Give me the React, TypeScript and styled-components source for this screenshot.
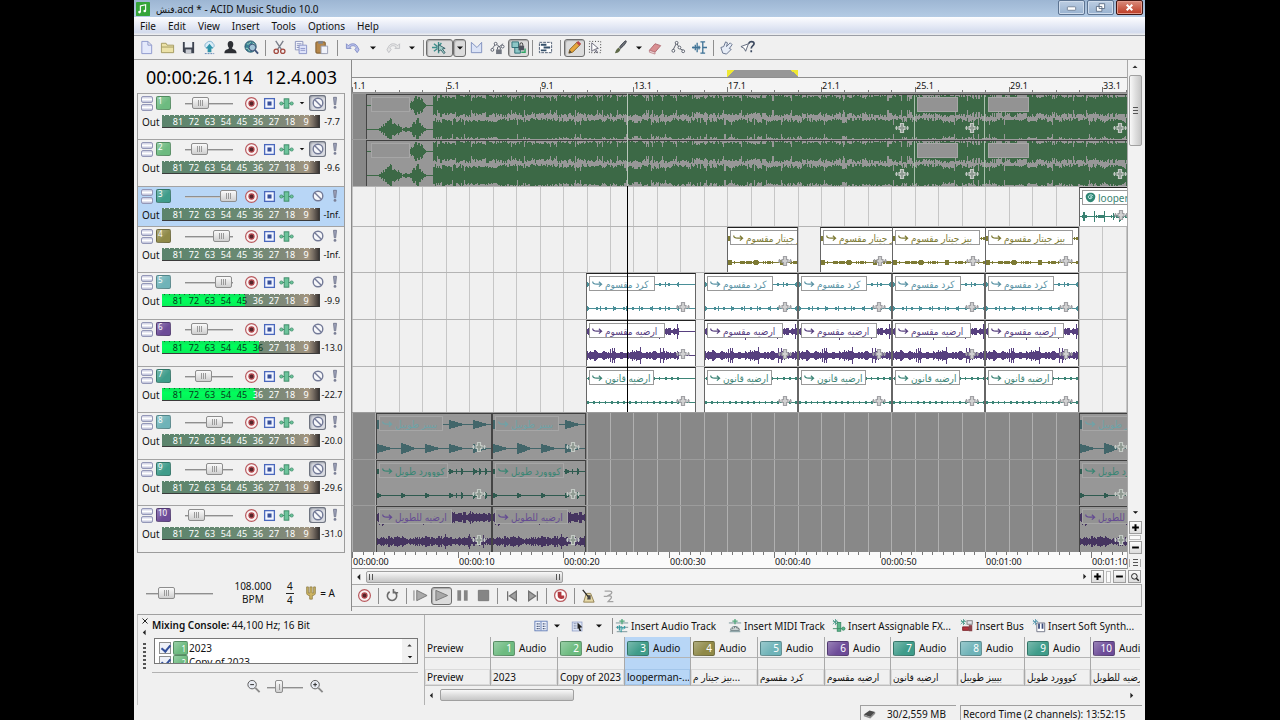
import React from 'react';
import styled, { createGlobalStyle, css } from 'styled-components';

const UI = `"Noto Sans", "DejaVu Sans Condensed", "DejaVu Sans", sans-serif`;

const Global = createGlobalStyle`
  * { box-sizing: border-box; }
  body { margin: 0; background: #000; font: 10px/14px ${UI}; color: #111; }
  button { font: inherit; color: inherit; background: none; border: 0; padding: 0; margin: 0; }
  svg { display: block; flex: none; }
`;

/* ---------- data ---------- */

const GREEN = '#6dbb80';
const TEAL = '#3f9c8a';
const OLIVE = '#8f8947';
const AQUA = '#6fb3b8';
const PURPLE = '#6d4c98';

type Kind = 'song' | 'sparse' | 'blocks' | 'dots' | 'fuzz' | 'fine' | 'decay' | 'burst' | 'roar';
type ClipData = { x: number; w: number; fx?: number };
type Track = {
  n: number; h: number; color: string; level: number; db: string; name: string; fill?: number;
  muted?: boolean; caret?: boolean; selected?: boolean;
  kind: Kind; wave: string; labelInk: string; label: string; labelW: number; clips: ClipData[];
};

const LOOP: ClipData[] = [
  { x: 234, w: 110 }, { x: 352, w: 94 }, { x: 446, w: 94 }, { x: 540, w: 93 }, { x: 633, w: 94 },
];
const INTRO: ClipData[] = [{ x: 24, w: 116 }, { x: 140, w: 94 }, { x: 727, w: 94, fx: 34 }];

const TRACKS: Track[] = [
  { n: 1, h: 46, color: GREEN, level: 28, db: '-7.7', name: '2023', muted: true, caret: true, kind: 'song', wave: '#3c6946', labelInk: '#7fa48a', label: '', labelW: 40, clips: [{ x: 14, w: 1400 }] },
  { n: 2, h: 47, color: GREEN, level: 26, db: '-9.6', name: 'Copy of 2023', muted: true, caret: true, kind: 'song', wave: '#3c6946', labelInk: '#7fa48a', label: '', labelW: 40, clips: [{ x: 14, w: 1400 }] },
  { n: 3, h: 40, color: TEAL, level: 100, db: '-Inf.', name: 'looperman-...', selected: true, kind: 'sparse', wave: '#3a8272', labelInk: '#3a8272', label: 'looperman', labelW: 80, clips: [{ x: 727, w: 94, fx: 34 }] },
  { n: 4, h: 46, color: OLIVE, level: 82, db: '-Inf.', name: 'بيز جيتار م...', kind: 'blocks', wave: '#7d7a34', labelInk: '#7d7a34', label: 'بيز جيتار مقسوم', labelW: 85, clips: [{ x: 375, w: 71 }, { x: 468, w: 73 }, { x: 540, w: 94 }, { x: 633, w: 94 }] },
  { n: 5, h: 47, color: AQUA, level: 87, db: '-9.9', name: 'كرد مقسوم', fill: 53, kind: 'dots', wave: '#4a8f98', labelInk: '#5a93a5', label: 'كرد مقسوم', labelW: 66, clips: LOOP },
  { n: 6, h: 47, color: PURPLE, level: 26, db: '-13.0', name: 'ارضيه مقسوم', fill: 62, kind: 'fuzz', wave: '#57407f', labelInk: '#57407f', label: 'ارضيه مقسوم', labelW: 76, clips: LOOP },
  { n: 7, h: 46, color: TEAL, level: 36, db: '-22.7', name: 'ارضيه قانون', fill: 59, kind: 'fine', wave: '#3d8577', labelInk: '#3d8577', label: 'ارضيه قانون', labelW: 65, clips: LOOP },
  { n: 8, h: 47, color: AQUA, level: 65, db: '-20.0', name: 'بيييز طويبل', muted: true, kind: 'decay', wave: '#42666a', labelInk: '#6ea3a8', label: 'بيييز طويبل', labelW: 64, clips: INTRO },
  { n: 9, h: 46, color: TEAL, level: 65, db: '-29.6', name: 'كووورد طويل', muted: true, kind: 'burst', wave: '#2f5b50', labelInk: '#3a8674', label: 'كووورد طويل', labelW: 69, clips: INTRO },
  { n: 10, h: 47, color: PURPLE, level: 18, db: '-31.0', name: 'ارضيه للطويل', muted: true, kind: 'roar', wave: '#453460', labelInk: '#644b92', label: 'ارضيه للطويل', labelW: 73, clips: INTRO },
];

/* ---------- wave forms ---------- */

const rand = (seed: number) => {
  let a = seed * 0x9e3779b1;
  return () => {
    a = (a + 0x6d2b79f5) | 0;
    let t = Math.imul(a ^ (a >>> 15), 1 | a);
    t = (t + Math.imul(t ^ (t >>> 7), 61 | t)) ^ t;
    return ((t ^ (t >>> 14)) >>> 0) / 4294967296;
  };
};

const bump = (x: number, c: number, half: number, h: number) =>
  Math.abs(x - c) < half ? h * (1 - Math.abs(x - c) / half) : 0;

/* r is fresh for every column, slow is held for a few columns */
function amplitude(kind: Kind, x: number, r: number, slow: number, ch: number): number {
  switch (kind) {
    case 'song': {
      if (x < 66) {
        const a = ch ? bump(x, 23, 12, 9) : 0;
        const b = bump(x, 50, 9, 10);
        const c = x > 30 && x < 42 ? 2 * r : 0;
        return (a + b) * (0.6 + r * 0.7) + c;
      }
      if (r < 0.04) return 4;
      if (r > 0.9) return 11;
      return 5.5 + slow * 3 + r * 3;
    }
    case 'sparse': return [3, 4, 14, 24, 33].includes(x % 36) ? 2 + r * 3 : r > 0.6 ? 1 : 0;
    case 'blocks': return x % 13 < 4 ? (x % 26 < 13 ? 2 : 1) : r > 0.6 ? 1 : 0;
    case 'dots': return x % 13 < 1 ? 2 : x % 9 < 2 ? 1 : 0;
    case 'fuzz': return 1 + slow * 2 + r * 2 + (r > 0.93 ? 3 : 0);
    case 'fine': return x % 6 < 2 && r > 0.2 ? 1 : 0;
    case 'decay': return x % 24 < 14 ? (Math.floor(x / 24) % 4 === 1 ? 5 : 4) * (1 - (x % 24) / 14) : 0;
    case 'burst': {
      const p = x % 24;
      return x > 78 && p < 18 && p % 6 < 2 ? 3 - (p % 6) : p < 4 ? 2 - p / 2 : 0;
    }
    case 'roar': return 1 + r * 3 + slow * 2 + (r > 0.92 ? 2 : 0);
  }
}

function wavePath(kind: Kind, w: number, y: number, ch: number, seed: number, end: number) {
  const next = rand(seed + ch * 7);
  let d = `M0 ${y}.5H${w}`;
  let slow = 0.5;
  for (let x = 0; x < end; x++) {
    if (x % 5 === 0) slow = next();
    const a = Math.min(12, Math.round(amplitude(kind, x, next(), slow, ch)));
    if (a > 0) d += `M${x}.5 ${y - a}v${a * 2 + 1}`;
  }
  return d;
}

/* ---------- icons ---------- */

const RED = '#b2383f';

const ICONS: Record<string, React.ReactNode> = {
  note: <><rect width="16" height="16" rx="1" fill="#35a53a" /><path d="M5 11.500V4.500l6-1.500v7" stroke="#fff" fill="none" strokeWidth="1.300" /><circle cx="4" cy="11.500" r="1.500" fill="#fff" /><circle cx="10" cy="10.300" r="1.500" fill="#fff" /></>,
  file: <path d="M3 1.500h6.500l4 4v9H3zM9.500 1.500v4h4" fill="#e4e9fb" stroke="#8d97cc" />,
  open: <path d="M1.500 13.500v-10h5l1 2h7v8zM1.500 7.500h13" fill="#ece2a8" stroke="#a39a60" />,
  save: <><path d="M2 2h12v12H4l-2-2z" fill="#3e4450" /><path d="M4 2h8v6H4z" fill="#eef0f4" /><path d="M5 10h6v4H5z" fill="#c9ccd3" /></>,
  cloud: <><path d="M4 8a3 3 0 0 1 1-5 4 4 0 0 1 7 1 2.500 2.500 0 0 1 0 4z" fill="#d8ecf7" stroke="#82b2cf" /><path d="M8 4l4 5h-2v4H6V9H4z" fill="#2f93a8" /><path d="M3 14.500h10" stroke="#5a7fb2" strokeDasharray="2 1" /></>,
  user: <path d="M8 1c2 0 3 1.500 3 3.500S10 8 9.500 8.500c0 1.500 5 1 5 5.500h-13c0-4.500 5-4 5-5.500C6 8 5 6.500 5 4.500S6 1 8 1z" fill="#2e3035" />,
  globe: <><circle cx="7" cy="7" r="6" fill="#3a7f93" stroke="#27566c" /><path d="M3 4c2 1 3 0 4-2M2 9c2-1 3 1 4 3M9 3l3 2" stroke="#a4d5c0" fill="none" /><circle cx="9" cy="8" r="3.500" fill="#cfe2f5" fillOpacity=".7" stroke="#41547a" /><path d="M11.500 10.500L15 14.500" stroke="#41547a" strokeWidth="2" /></>,
  cut: <><path d="M4 1l6 9M12 1l-6 9" stroke="#7b7f8a" strokeWidth="1.500" /><circle cx="4.500" cy="12" r="2.300" fill="none" stroke="#a34a40" strokeWidth="1.400" /><circle cx="11.500" cy="12" r="2.300" fill="none" stroke="#a34a40" strokeWidth="1.400" /></>,
  copy: <><path d="M2.500 1.500h8v9h-8zM4 4h5M4 6h5M4 8h3" fill="#f4f5fc" stroke="#8b93bb" /><path d="M6.500 5.500h8v9h-8z" fill="#dfe4fa" stroke="#8b93c8" /><path d="M8 9h5M8 11h5" stroke="#8b93c8" /></>,
  paste: <><rect x="2" y="2" width="10" height="12" rx="1" fill="#b5874a" stroke="#77552a" /><path d="M4.500 1h5v3h-5z" fill="#808590" /><path d="M7.500 6.500h7v8h-7z" fill="#f1f3fb" stroke="#9aa0b4" /></>,
  undo: <path d="M1.500 4v5h5L5 7.500c3-2.500 6-1.500 7 1l-1.500 1.500 2.500 3.500 2-3-1-2C12 3 7 3 3.500 6z" fill="#b9c0ea" stroke="#7d88c4" strokeWidth=".9" />,
  redo: <path d="M14.500 4v5h-5L11 7.500c-3-2.500-6-1.500-7 1l1.500 1.500L3 13.500l-2-3 1-2C4 3 9 3 12.500 6z" fill="#e6e6e6" stroke="#bcbec2" strokeWidth=".9" />,
  snap: <><path d="M0 8h6M2 4l4 3M2 12l4-3M7 2v4M7 10v4M10 3L8 6" stroke="#3f8f8c" strokeWidth="1.500" /><path d="M7 5l7 4-3 .500 3 4-1.500 1-3-4L7 12z" fill="#a6cfca" stroke="#36636a" /></>,
  fade: <path d="M2.500 2.500v11h11v-11L8.500 8z" fill="#dbe3f6" stroke="#7f90bd" />,
  lock: <><path d="M2 10L6 4l4 3 4-3" fill="none" stroke="#666c78" /><circle cx="2.500" cy="10.500" r="1.500" fill="#fff" stroke="#555b68" /><circle cx="6" cy="4" r="1.500" fill="#fff" stroke="#555b68" /><circle cx="13.500" cy="7" r="1.500" fill="#fff" stroke="#555b68" /><rect x="6.500" y="10" width="6" height="5" fill="#70757f" /><path d="M8 10V8.500a1.500 1.500 0 0 1 3 0V10" fill="none" stroke="#555b68" /></>,
  locked: <><path d="M1 2h7v6H1zM4 8h6v6H4z" fill="#8cc6c6" stroke="#2f6e75" /><rect x="8" y="6" width="6" height="5" fill="#4f545e" /><path d="M9.500 6V4.500a1.500 1.500 0 0 1 3 0V6" fill="none" stroke="#333" /><path d="M11 13h4V9" stroke="#2fa665" fill="none" strokeWidth="1.500" /></>,
  bars: <><path d="M1.500 2.500h13v11h-13z" fill="#fff" stroke="#4b5a70" strokeDasharray="3 1" /><path d="M3 5h6M6 8h7M3 11h6" stroke="#35506a" strokeWidth="2" /></>,
  pencil: <><path d="M2 14l1-4 8-8 3 3-8 8z" fill="#e7a63c" stroke="#8a6423" /><path d="M10 3l3 3 2-2-3-3z" fill="#b9474a" /><path d="M2 14l1-3 2 2z" fill="#444" /></>,
  marquee: <><path d="M1.500 1.500h12v12h-12z" fill="none" stroke="#333" strokeDasharray="1 2" /><path d="M4 3l7 6-3 .500L10 13l-1.500.500L7 10l-3 2z" fill="#fff" stroke="#667" /></>,
  brush: <><path d="M14 1c1 1-3 6-6 8L7 7.500C9 5 13 0 14 1z" fill="#6c7078" stroke="#3f434b" /><path d="M6 8l2 2c-1 3-4 4-6 4 1-2 1-4 4-6z" fill="#5f6a4a" /></>,
  eraser: <><path d="M1.500 11l6-7 6 2-6 7z" fill="#d98f92" stroke="#b06b72" /><path d="M1.500 11l6 2v2l-6-2z" fill="#f0d9da" stroke="#b06b72" strokeWidth=".7" /></>,
  envelope: <><path d="M2 11L6 3l3 6 4 2" stroke="#555b68" fill="none" /><circle cx="2.500" cy="11.500" r="1.500" fill="#fff" stroke="#555b68" /><circle cx="6" cy="3" r="1.500" fill="#fff" stroke="#555b68" /><circle cx="9" cy="8" r="1.500" fill="#fff" stroke="#555b68" /><circle cx="13" cy="12" r="1.500" fill="#fff" stroke="#555b68" /></>,
  time: <path d="M0 8h9M1.500 7v2M3.500 5v6M5.500 3v10M7.500 6v4M9 2h5M9 14h5M11.500 2v12M11.500 8H16" stroke="#3e7296" strokeWidth="1.400" fill="none" />,
  hand: <path d="M4 14l-2-6 3-1 2-5 2 1-1 4 4-4 2 2-3 4 2 1-5 5z" fill="#e7edf7" stroke="#64718c" />,
  help: <><path d="M1 7l8-3-3 8-1.500-3z" fill="#fff" stroke="#5b6478" /><path d="M9.500 4c0-3 5.500-3 5.500 0 0 2-3 2-3 5M12 11v2" stroke="#3d4a60" strokeWidth="1.800" fill="none" /></>,
  rec: <><circle cx="8" cy="8" r="6.300" fill="#faf3f3" stroke="#b95a5f" strokeWidth="1.300" /><circle cx="8" cy="8" r="2.700" fill="#55262b" stroke="#b5474d" strokeWidth="1.300" /></>,
  square: <><rect x="2" y="2" width="12" height="12" fill="#f3f6ff" stroke="#4a68bc" strokeWidth="1.600" /><rect x="5.500" y="5.500" width="5" height="5" fill="#38509a" /></>,
  fx: <><path d="M1 8h14" stroke="#3c8a66" /><rect x="5.500" y="3" width="5" height="10" fill="#6cc49b" stroke="#3c8a66" /><circle cx="2.500" cy="8" r="1.700" fill="#6cc49b" stroke="#3c8a66" strokeWidth=".8" /><circle cx="13.500" cy="8" r="1.700" fill="#6cc49b" stroke="#3c8a66" strokeWidth=".8" /></>,
  mute: <><circle cx="8" cy="8" r="5.500" fill="#f6f7fa" stroke="#747b98" strokeWidth="1.600" /><path d="M4 4l8 8" stroke="#747b98" strokeWidth="1.600" /></>,
  solo: <><path d="M6.300 1.500h3.400l-.900 8.500h-1.600z" fill="#a0a4ba" stroke="#666c84" strokeWidth=".9" /><circle cx="8" cy="13" r="1.600" fill="#7a7f95" /></>,
  loop: <path d="M5 4a5 5 0 1 0 5 0M9 1v4h5" fill="none" stroke="#6a6a6a" strokeWidth="1.700" />,
  playstart: <path d="M1 2.500v11M4 2.500v11L15 8z" fill="#aaa" stroke="#777" />,
  play: <path d="M2 2.500v11L14.500 8z" fill="#a8a8a8" stroke="#777" />,
  pause: <path d="M2.500 2.500h4v11h-4zM9.500 2.500h4v11h-4z" fill="#858585" />,
  stop: <path d="M2.500 2.500h11v11h-11z" fill="#858585" stroke="#777" />,
  prev: <path d="M3 2.500v11M13 2.500v11L5 8z" fill="#a0a0a0" stroke="#707070" strokeWidth="1.400" />,
  next: <path d="M13 2.500v11M3 2.500v11L11 8z" fill="#a0a0a0" stroke="#707070" strokeWidth="1.400" />,
  punch: <><circle cx="8" cy="8" r="6.300" fill="#fff" stroke="#b95a5f" strokeWidth="1.400" /><path d="M5 4h4v4h3v3c-4 2-7 0-7-3z" fill={RED} /></>,
  metro: <><path d="M6 5h5l4 10H3z" fill="#e6d9a8" stroke="#8d7c4c" /><path d="M2 1l8 10" stroke="#222" strokeWidth="1.400" /><path d="M8 7h3v5H7z" fill="#444" /></>,
  count: <path d="M3 2.500h6c3 0 3 3 0 4L6 8c4-1 6 1 4 3l-3 3.500h6M2 8.500h4" stroke="#a2a2a2" strokeWidth="1.500" fill="none" />,
  fork: <path d="M3 1v7c0 2 2 3 3.500 3v4h3v-4C11 11 13 10 13 8V1h-2v7H9.300V1H6.700v7H5V1z" fill="#cdb463" stroke="#85733a" strokeWidth=".8" />,
  grid: <><rect x="1" y="2.500" width="14" height="11" fill="#eef2fc" stroke="#5c78b4" /><path d="M3 5.500h4M3 8.500h4M3 11h4M10 5.500h3M10 8.500h3M10 11h3" stroke="#4a5a7c" strokeWidth="1.400" strokeDasharray="1.500 .500" /><path d="M8 3v10" stroke="#5c78b4" /></>,
  pick: <><rect x="1.500" y="2.500" width="12" height="11" fill="#dfe6f6" stroke="#8f9ec6" /><path d="M4 4v8M6 4v8" stroke="#4a5a7c" strokeDasharray="1 1" /><path d="M8 3l6 6-3 .500 1.500 4h-2L9 10l-1 1z" fill="#222" /></>,
  insAudio: <><path d="M1 4.500h14M1 9.500h14M2 14.500h12" stroke="#6b8a90" /><path d="M8 0v6M5 2.500h6" stroke="#52a77b" strokeWidth="1.500" /><path d="M3 8v3M5 7v6M7 8v7M9 9v3M11 8v3" stroke="#2f9aa0" strokeWidth="1.300" /></>,
  insMidi: <><path d="M1 4.500h14M2 14.500h12" stroke="#6b8a90" /><path d="M8 0v6M5 2.500h6" stroke="#52a77b" strokeWidth="1.500" /><path d="M3 13c0-6 10-6 10 0z" fill="#d7e0e0" stroke="#5f7478" /><path d="M5 11h1M7 10h1M9 10h1M11 11h1" stroke="#333" /></>,
  insFx: <><path d="M4 0v7M1 3h6M1 1l5 5M6 1L1 6" stroke="#4f9d8b" /><rect x="6" y="4" width="4" height="10" fill="#5cb88c" stroke="#3c8a66" /><path d="M1 11h14" stroke="#3c8a66" /><circle cx="13" cy="11" r="1.800" fill="#5cb88c" stroke="#3c8a66" /></>,
  insBus: <><path d="M4 0v7M1 3h6M1 1l5 5M6 1L1 6" stroke="#4f9d8b" /><rect x="8" y="2" width="6" height="4" fill="#e2e4ea" stroke="#777" /><path d="M3 9h7v4H3z" fill="#b3323c" stroke="#7c2229" /><path d="M10 7h4v7h-4z" fill="#8b4248" /></>,
  insSynth: <><path d="M4 0v7M1 3h6M1 1l5 5M6 1L1 6" stroke="#5c9ab0" /><path d="M5.500 4.500h9v10h-9z" fill="#fff" stroke="#6a6f80" /><path d="M8 5v6M12 5v6" stroke="#3a4a7a" strokeWidth="2" /></>,
  zoomOut: <><circle cx="6.500" cy="6" r="4.500" fill="#e8ebf2" stroke="#555" /><path d="M4.500 6h4" stroke="#222" /><path d="M10 9.500l4.500 4.500" stroke="#8a8a8a" strokeWidth="2" /></>,
  zoomIn: <><circle cx="6.500" cy="6" r="4.500" fill="#e8ebf2" stroke="#555" /><path d="M4.500 6h4M6.500 4v4" stroke="#222" /><path d="M10 9.500l4.500 4.500" stroke="#8a8a8a" strokeWidth="2" /></>,
  lens: <><circle cx="7" cy="7" r="4.500" fill="none" stroke="#222" strokeWidth="1.600" /><path d="M10 10l4 4" stroke="#222" strokeWidth="2.200" /></>,
  plus: <path d="M8 2v12M2 8h12" stroke="#000" strokeWidth="3.500" />,
  minus: <path d="M2 8h12" stroke="#000" strokeWidth="3.500" />,
  down: <path d="M2 5h12l-6 6z" fill="#111" />,
  up: <path d="M3 10h10L8 5z" fill="#333" />,
  left: <path d="M10 3v10L5 8z" fill="#222" />,
  right: <path d="M6 3v10l5-5z" fill="#222" />,
  hook: <path d="M1 5c0 4 3 4 6 4h6M10 5.500L14 9l-4 3.500" stroke="currentColor" strokeWidth="1.700" fill="none" />,
  loopLogo: <><path d="M8 1c5 0 7 3 7 6s-3 8-7 8-7-5-7-8 2-6 7-6z" fill="#2f8573" /><path d="M12 6c-2-3-8-2-7 2 1 3 6 2 5-1-1-1-3 0-2 1" stroke="#dff" strokeWidth="1.300" fill="none" /></>,
  min: <rect x="2" y="7" width="12" height="5" rx="1" fill="#fff" stroke="#54657c" />,
  restore: <path d="M6 2.500h8v7H6zM2 6.500h8v7H2z" fill="#fff" stroke="#54657c" strokeWidth="1.200" />,
  close: <path d="M3 3l10 10M13 3L3 13" stroke="#fff" strokeWidth="3.500" />,
  x: <path d="M3 3l10 10M13 3L3 13" stroke="#222" strokeWidth="2" />,
  chip: <><path d="M1 8l7-5 7 2-6 6z" fill="#4a4a4a" /><path d="M1 8v2l8 3v-2zM9 11v2l6-6V5z" fill="#888" /></>,
};

const Icon = ({ name, size = 16 }: { name: string; size?: number }) => (
  <svg width={size} height={size} viewBox="0 0 16 16" fill="none" aria-hidden="true">{ICONS[name]}</svg>
);

/* ---------- window chrome ---------- */

const Window = styled.main`
  margin: 0 135px 0 134px;
  min-height: 100vh;
  background: #f0f0f0;
  display: flex;
  flex-direction: column;
  white-space: nowrap;
  overflow: hidden;
`;

const TitleBar = styled.header`
  height: 17px;
  display: flex;
  align-items: center;
  gap: 6px;
  padding: 0 2px;
  background: linear-gradient(#9db6d3, #b4cbe4);
`;

const Title = styled.span`
  flex: 1;
`;

const WinButtons = styled.div`
  display: flex;
  gap: 2px;
  align-self: flex-start;
`;

const WinButton = styled.button<{ $red?: boolean }>`
  width: 27px;
  height: 15px;
  display: flex;
  align-items: center;
  justify-content: center;
  border: 1px solid ${p => (p.$red ? '#3f1512' : '#5c7391')};
  border-radius: 2px;
  box-shadow: inset 0 0 0 1px ${p => (p.$red ? '#e39a8b' : '#cfdcec')};
  background: ${p => (p.$red ? 'linear-gradient(#d98b7b, #bd3a23)' : 'linear-gradient(#bccde2, #98b2d0)')};
`;

const MenuBar = styled.nav`
  height: 19px;
  display: flex;
  align-items: center;
  gap: 12px;
  padding: 0 6px;
  border-bottom: 1px solid #9b9ea6;
  background: linear-gradient(#fdfdff, #e2e7f4 55%, #d3dbed 85%, #f0f0f0);
`;

const Bar = styled.div`
  height: 24px;
  display: flex;
  align-items: center;
  padding: 0 2px;
  border-bottom: 1px solid #a0a0a0;
`;

const ToolButton = styled.button<{ $w?: number; $on?: boolean }>`
  width: ${p => p.$w ?? 21}px;
  height: 18px;
  flex: none;
  display: flex;
  align-items: center;
  justify-content: center;
  ${p => p.$on && css`
    border: 1px solid #6e6e6e;
    border-radius: 3px;
    background: #dcdcdc;
    box-shadow: inset 1px 1px 1px #a8a8a8;
  `}
`;

const Sep = styled.i<{ $w?: number }>`
  width: ${p => p.$w ?? 7}px;
  height: 16px;
  flex: none;
  display: flex;
  justify-content: center;
  &::after { content: ''; width: 1px; background: #8e8e8e; }
`;

/* ---------- track list ---------- */

const Body = styled.div`
  display: flex;
  align-items: stretch;
`;

const TrackPanel = styled.section`
  width: 217px;
  flex: none;
`;

const Clock = styled.div`
  height: 33px;
  display: flex;
  justify-content: space-between;
  padding: 5px 14px 0 12px;
  font-size: 18px;
  line-height: 24px;
  color: #000;
`;

const TrackList = styled.div`
  margin: 0 6px 0 3px;
  border: solid #9c9c9c;
  border-width: 0 1px 1px;
`;

const Row = styled.article<{ $h: number; $selected?: boolean }>`
  height: ${p => p.$h}px;
  border-top: 1px solid #a3a3a3;
  background: ${p => (p.$selected ? '#b8d6f6' : '#f1f1f1')};
`;

const RowLine = styled.div<{ $h: number }>`
  height: ${p => p.$h}px;
  display: flex;
  align-items: center;
  padding-left: 3px;
`;

const SizeButtons = styled.div`
  width: 12px;
  display: flex;
  flex-direction: column;
  gap: 1px;
  margin-right: 3px;
  button {
    height: 7px;
    border: 1px solid #9498b8;
    border-radius: 2px;
    background: linear-gradient(#c9cbe0, #fff 50%, #b9bcd6);
  }
`;

const Badge = styled.span<{ $c: string; $wide?: boolean; $end?: boolean }>`
  width: ${p => (p.$wide ? 22 : 15)}px;
  height: ${p => (p.$wide ? 15 : 14)}px;
  flex: none;
  padding: 0 ${p => (p.$wide ? 2 : 1)}px;
  border-radius: 2px;
  border: 1px solid rgba(0, 0, 0, 0.25);
  background: linear-gradient(135deg, rgba(255, 255, 255, 0.3), rgba(255, 255, 255, 0) 60%) ${p => p.$c};
  color: #fff;
  font-size: ${p => (p.$wide ? 10 : 8)}px;
  line-height: ${p => (p.$wide || p.$end ? 13 : 8)}px;
  text-align: ${p => (p.$wide || p.$end ? 'right' : 'left')};
`;

const Slider = styled.input.attrs({ type: 'range', min: 0, max: 100 })<{ $w: number; $thumb?: number; $inset?: number; $after?: number }>`
  appearance: none;
  width: ${p => p.$w}px;
  height: 14px;
  flex: none;
  margin: 0 ${p => p.$after ?? 0}px 0 0;
  background: linear-gradient(#8f8f8f 0 1px, #c9c9c9 1px) ${p => p.$inset ?? 0}px 7px / ${p => p.$w - 2 * (p.$inset ?? 0)}px 2px no-repeat;
  &::-webkit-slider-thumb {
    appearance: none;
    width: ${p => p.$thumb ?? 17}px;
    height: ${p => (p.$thumb ? 13 : 12)}px;
    border: 1px solid #8d8d8d;
    border-radius: 2px;
    background:
      repeating-linear-gradient(90deg, #999 0 1px, transparent 1px 2px) center / ${p => (p.$thumb ? 1 : 5)}px 6px no-repeat,
      linear-gradient(#fafafa, #cfcfcf);
  }
`;

const RowButton = styled.button<{ $w: number; $on?: boolean }>`
  width: ${p => p.$w}px;
  height: 16px;
  flex: none;
  display: flex;
  align-items: center;
  justify-content: center;
  border-radius: 3px;
  ${p => p.$on && css`
    background: #dadce2;
    box-shadow: inset 0 0 0 1px #6f7480, inset 1px 1px 2px 1px #9a9ea8;
  `}
`;

const OutLabel = styled.span`
  width: 21px;
  padding-left: 1px;
`;

const Meter = styled.div`
  width: 158px;
  height: 13px;
  display: flex;
  position: relative;
  border: solid #3b3b3b;
  border-width: 0 1px 1px 0;
  background: linear-gradient(90deg, #5b846c, #6b8a73 55%, #83897a 80%, #a3957f 93%, #7c7166 96%, #3a3533);
  padding-left: 8px;
  color: #fff;
  font-size: 9px;
  line-height: 14px;
  &::before {
    content: '';
    position: absolute;
    inset: 0 4px auto 2px;
    height: 1px;
    background: repeating-linear-gradient(90deg, #e8f0e8 0 1px, transparent 1px 5px);
  }
`;

const Lit = styled.i`
  position: absolute;
  inset: 0 auto 0 0;
  background: linear-gradient(#10e05a, #00ff5c 40%, #08f058);
  &::before {
    content: '';
    position: absolute;
    inset: 0 0 auto 2px;
    height: 1px;
    background: repeating-linear-gradient(90deg, #145c2c 0 1px, transparent 1px 5px);
  }
`;

const MeterNumber = styled.span<{ $dark?: boolean }>`
  position: relative;
  width: 16px;
  text-align: center;
  color: ${p => (p.$dark ? '#07391a' : '#fff')};
`;

const Db = styled.output`
  flex: 1;
  text-align: center;
  font-size: 9px;
  line-height: 12px;
`;

const Tempo = styled.div`
  height: 58px;
  display: flex;
  align-items: center;
  padding: 22px 16px 0 12px;
  line-height: 13px;
  text-align: center;
`;

const Bpm = styled.div`
  width: 48px;
  margin-left: 19px;
`;

const Signature = styled.div`
  width: 9px;
  margin: 0 10px 0 12px;
  b { display: block; font-weight: 400; border-bottom: 1px solid #222; }
`;

/* ---------- timeline ---------- */

const Editor = styled.section`
  flex: 1;
  min-width: 0;
  border-left: 1px solid #8a8a8a;
`;

const EditArea = styled.div`
  display: flex;
`;

const Timeline = styled.div`
  flex: 1;
  min-width: 0;
  overflow: hidden;
`;

const MarkerBar = styled.div`
  height: 18px;
  position: relative;
  border-bottom: 1px solid #8f8f8f;
`;

const Region = styled.div`
  position: absolute;
  left: 375px;
  bottom: 0;
  width: 71px;
  height: 7px;
  background:
    linear-gradient(135deg, #efe833 50%, transparent 50%) left / 7px 7px no-repeat,
    linear-gradient(225deg, #efe833 50%, transparent 50%) right / 7px 7px no-repeat,
    #979797;
`;

const Ruler = styled.div<{ $h: number }>`
  position: relative;
  height: ${p => p.$h}px;
  overflow: hidden;
  background: ${p => (p.$h > 15 ? '#fafafa' : '#f4f4f4')};
  border-bottom: 1px solid #8f8f8f;
  svg { position: absolute; inset: 0; }
`;

const Mark = styled.span<{ $x: number; $y: number }>`
  position: absolute;
  left: ${p => p.$x}px;
  top: ${p => p.$y}px;
  font-size: 9px;
  line-height: 12px;
`;

const Lanes = styled.div`
  position: relative;
`;

const Lane = styled.div<{ $h: number; $dark?: boolean }>`
  position: relative;
  height: ${p => p.$h}px;
  overflow: hidden;
  border-top: 1px solid ${p => (p.$dark ? '#9c9c9c' : '#b4b4b4')};
  background: ${p => (p.$dark ? '#888' : '#f0f0f0')};
  & > svg { position: absolute; inset: 0; }
`;

const Clip = styled.div<{ $x: number; $w: number; $dark?: boolean }>`
  position: absolute;
  left: ${p => p.$x}px;
  top: 0;
  bottom: 0;
  width: ${p => p.$w}px;
  overflow: hidden;
  border: solid ${p => (p.$dark ? '#444' : '#666')};
  border-width: 1px 1px 0 1px;
  border-top-color: ${p => (p.$dark ? '#3f3f3f' : '#222')};
  background: ${p => (p.$dark ? '#979797' : '#fff')};
  & > svg { position: absolute; left: 0; top: 0; }
`;

const ClipLabel = styled.span<{ $x: number; $w: number; $c: string; $dark?: boolean }>`
  position: absolute;
  left: ${p => p.$x}px;
  top: 2px;
  width: ${p => p.$w}px;
  height: 15px;
  padding-left: 2px;
  display: flex;
  align-items: center;
  gap: 2px;
  overflow: hidden;
  border: 1px solid ${p => (p.$dark ? '#a6a6a6' : '#999')};
  background: ${p => (p.$dark ? '#939393' : '#fff')};
  color: ${p => p.$c};
  font-size: 10px;
  line-height: 12px;
`;

const FxMark = styled.i<{ $x: number; $y: number }>`
  position: absolute;
  left: ${p => p.$x}px;
  top: ${p => p.$y}px;
`;

const Playhead = styled.i<{ $from: number; $to: number; $c: string }>`
  position: absolute;
  left: 275px;
  top: ${p => p.$from}px;
  height: ${p => p.$to - p.$from}px;
  width: 1px;
  background: ${p => p.$c};
`;

const VScroll = styled.div`
  width: 15px;
  margin-right: 3px;
  flex: none;
  display: flex;
  flex-direction: column;
  align-items: center;
  border-left: 1px solid #a8a8a8;
  background: #f2f2f2;
  padding-top: 3px;
`;

const VZoom = styled.div`
  display: flex;
  flex-direction: column;
  align-items: center;
  gap: 1px;
  padding: 5px 0;
`;

const Thumb = styled.div<{ $vertical?: boolean; $w?: number }>`
  ${p => (p.$vertical ? css`width: 13px; height: 71px; margin-top: 4px;` : css`width: ${p.$w}px; height: 12px;`)}
  display: flex;
  flex-direction: ${p => (p.$vertical ? 'column' : 'row')};
  align-items: center;
  justify-content: ${p => (p.$vertical ? 'center' : 'space-between')};
  padding: ${p => (p.$vertical ? 0 : '0 2px')};
  border: 1px solid #a0a0a0;
  border-radius: 2px;
  background: linear-gradient(${p => (p.$vertical ? '90deg' : '180deg')}, #f8f8f8, #dedede 50%, #c6c6c6);
`;

const Grip = styled.i<{ $vertical?: boolean }>`
  width: ${p => (p.$vertical ? 5 : 4)}px;
  height: ${p => (p.$vertical ? 7 : 6)}px;
  background: repeating-linear-gradient(${p => (p.$vertical ? '180deg' : '90deg')}, #555 0 1px, transparent 1px 3px);
`;

const ScrubBar = styled.div`
  width: 12px;
  height: 8px;
  margin-bottom: 2px;
  display: flex;
  justify-content: center;
  border: solid #aaa;
  border-width: 0 1px;
`;

const ZoomNub = styled.i<{ $vertical?: boolean }>`
  width: ${p => (p.$vertical ? 12 : 5)}px;
  height: ${p => (p.$vertical ? 5 : 12)}px;
  border: 1px solid #bdbdbd;
  background: #fafafa;
`;

const SmallButton = styled.button`
  width: 13px;
  height: 13px;
  flex: none;
  display: flex;
  align-items: center;
  justify-content: center;
  border: 1px solid #9d9d9d;
  background: linear-gradient(#fcfcfc, #dcdcdc);
`;

const Spring = styled.i`
  flex: 1;
`;

const HScroll = styled.div`
  height: 15px;
  display: flex;
  align-items: center;
  gap: 2px;
  padding: 0 4px 0 2px;
  background: #f4f4f4;
`;

const Transport = styled.div`
  height: 23px;
  margin-right: 3px;
  display: flex;
  align-items: center;
  padding-left: 2px;
  border: solid #a8a8a8;
  border-width: 1px 1px 1px 0;
`;

/* ---------- mixing console ---------- */

const Console = styled.section`
  height: 91px;
  margin: 3px 3px 0;
  display: flex;
  border-top: 1px solid #a0a0a0;
  border-left: 1px solid #c4c4c4;
`;

const Handle = styled.div`
  width: 13px;
  display: flex;
  flex-direction: column;
  align-items: center;
  gap: 3px;
  padding-top: 2px;
  &::after {
    content: '';
    width: 3px;
    height: 26px;
    margin-top: 3px;
    background: repeating-linear-gradient(#555 0 2px, transparent 2px 4px);
  }
`;

const ConsoleLeft = styled.div`
  width: 273px;
  flex: none;
  padding: 3px 6px 0 1px;
`;

const ConsoleTitle = styled.h2`
  margin: 0;
  font-size: 10px;
  line-height: 14px;
  font-weight: 400;
  b { font-weight: 600; }
`;

const ListBox = styled.div`
  height: 26px;
  margin-top: 6px;
  margin-left: 2px;
  display: flex;
  border: 1px solid #777;
  background: #fff;
  overflow: hidden;
`;

const ListItems = styled.div`
  flex: 1;
  padding: 2px 4px;
`;

const ListItem = styled.label`
  height: 14px;
  display: flex;
  align-items: center;
  gap: 1px;
`;

const Check = styled.input.attrs({ type: 'checkbox' })`
  appearance: none;
  width: 12px;
  height: 12px;
  margin: 0 1px 0 0;
  border: 1px solid #8e8f8f;
  background: #eef1f8;
  position: relative;
  &:checked::after {
    content: '';
    position: absolute;
    left: 3px;
    top: 0;
    width: 4px;
    height: 7px;
    border: solid #33509c;
    border-width: 0 2px 2px 0;
    transform: rotate(40deg);
  }
`;

const ListScroll = styled.div`
  width: 15px;
  display: flex;
  flex-direction: column;
  align-items: center;
  justify-content: space-around;
  background: #f1f1f1;
`;

const ZoomLine = styled.div`
  display: flex;
  align-items: center;
  justify-content: center;
  gap: 6px;
  height: 28px;
  margin-top: 8px;
  border-top: 1px solid #b2b2b2;
`;

const Strips = styled.div`
  flex: 1;
  min-width: 0;
  border-left: 1px solid #b2b2b2;
`;

const InsertBar = styled.div`
  height: 22px;
  display: flex;
  align-items: center;
  justify-content: flex-end;
  padding-right: 9px;
`;

const InsertButton = styled.button<{ $w: number }>`
  width: ${p => p.$w}px;
  flex: none;
  display: flex;
  align-items: center;
  gap: 2px;
`;

const StripRow = styled.div`
  display: flex;
  overflow: hidden;
  margin-right: 2px;
`;

const Strip = styled.article<{ $selected?: boolean }>`
  width: 67px;
  &:nth-child(3n + 1) { width: 66px; }
  flex: none;
  height: 49px;
  border-right: 1px solid #a9a9a9;
  border-bottom: 1px solid #bdbdbd;
  background: ${p => (p.$selected ? '#b8d6f6' : 'transparent')};
`;

const StripHead = styled.div`
  height: 21px;
  display: flex;
  align-items: center;
  gap: 4px;
  padding: 2px 2px 0;
  border-bottom: 1px solid #b4b4b4;
`;

const StripName = styled.div<{ $selected?: boolean }>`
  height: 16px;
  margin-top: 11px;
  padding: 0 1px;
  display: flex;
  align-items: center;
  overflow: hidden;
  border: 1px solid ${p => (p.$selected ? '#a3c6ea' : '#dadada')};
`;

const StripScroll = styled.div`
  height: 18px;
  display: flex;
  align-items: center;
  gap: 4px;
  padding: 0 6px 0 2px;
`;

const Status = styled.footer`
  height: 15px;
  display: flex;
  gap: 4px;
  justify-content: flex-end;
  padding-right: 3px;
`;

const StatusCell = styled.div<{ $w: number }>`
  width: ${p => p.$w}px;
  display: flex;
  align-items: center;
  gap: 11px;
  padding: 2px 2px 0;
  border: solid #a0a0a0;
  border-width: 1px 0 0 1px;
`;

/* ---------- parts ---------- */

const METER_NUMBERS = [81, 72, 63, 54, 45, 36, 27, 18, 9];

function TrackRow({ t }: { t: Track }) {
  return (
    <Row $h={t.h} $selected={t.selected}>
      <RowLine $h={18}>
        <SizeButtons><button aria-label="Minimize track" /><button aria-label="Maximize track" /></SizeButtons>
        <Badge $c={t.color}>{t.n}</Badge>
        <Spring />
        <Slider $w={56} $inset={4} $after={6} defaultValue={t.level} aria-label={`Track ${t.n} volume`} />
        <RowButton $w={17} aria-label="Arm for record"><Icon name="rec" size={15} /></RowButton>
        <RowButton $w={18} aria-label="Bus"><Icon name="square" size={13} /></RowButton>
        <RowButton $w={17} aria-label="Track FX"><Icon name="fx" size={15} /></RowButton>
        <RowButton $w={14} aria-label="Automation">{t.caret && <Icon name="down" size={6} />}</RowButton>
        <RowButton $w={17} $on={t.muted} aria-label="Mute"><Icon name="mute" size={14} /></RowButton>
        <RowButton $w={18} aria-label="Solo"><Icon name="solo" size={14} /></RowButton>
      </RowLine>
      <RowLine $h={19}>
        <OutLabel>Out</OutLabel>
        <Meter>
          {t.fill && <Lit style={{ width: `${t.fill}%` }} />}
          {METER_NUMBERS.map((n, i) => (
            <MeterNumber key={n} $dark={!!t.fill && i * 10 + 10 < t.fill}>{n}</MeterNumber>
          ))}
        </Meter>
        <Db>{t.db}</Db>
      </RowLine>
    </Row>
  );
}

const bars = Array.from({ length: 80 }, (_, i) => Math.round(i * 23.45));

const GridLines = ({ dark }: { dark?: boolean }) => (
  <svg width="1400" height="48" shapeRendering="crispEdges">
    <path d={bars.map(x => `M${x}.5 0V48`).join('')} stroke={dark ? '#b0b0b0' : '#c6c6c6'} />
  </svg>
);

const Fader = ({ dark }: { dark?: boolean }) => (
  <svg width="14" height="12" viewBox="0 0 14 12">
    <path
      d="M0 6h3M4 4.500h1.500v-3h3v3H10v3H8.500v3h-3v-3H4zM11 6h3"
      fill={dark ? '#8f9a92' : '#d2d2d2'}
      stroke={dark ? '#c4cac5' : '#a0a0a4'}
      strokeWidth="1.200"
    />
    <path d="M1.500 4v4M12.500 4v4" stroke={dark ? '#c4cac5' : '#a0a0a4'} strokeWidth="1.300" />
  </svg>
);

const SONG_LABELS = [[4, 39], [550, 41], [621, 41]];
const SONG_FX = [528, 598, 746];

function TrackLane({ t }: { t: Track }) {
  const low = t.h === 40 ? 28 : 34;
  const song = t.kind === 'song';
  return (
    <Lane $h={t.h} $dark={t.muted}>
      <GridLines dark={t.muted} />
      {t.clips.map((c, i) => {
        const short = t.fill && i === 0;
        const end = short ? 92 : c.w;
        return (
          <Clip key={c.x} $x={c.x} $w={c.w} $dark={t.muted}>
            <svg width={c.w} height={t.h} shapeRendering="crispEdges">
              <path d={wavePath(t.kind, c.w, 10, 0, song ? 3 : t.n, end)} stroke={t.wave} />
              <path d={wavePath(t.kind, c.w, low, 1, song ? 3 : t.n, end)} stroke={t.wave} />
              {song && <path d="M547.5 0V48M617.5 0V48" stroke="#a9c0ad" />}
            </svg>
            {song
              ? SONG_LABELS.map(([x, w]) => <ClipLabel key={x} $x={x} $w={w} $c={t.labelInk} $dark />)
              : (
                <ClipLabel $x={2} $w={Math.min(t.labelW, c.w - 3)} $c={t.labelInk} $dark={t.muted}>
                  <Icon name={t.n === 3 ? 'loopLogo' : 'hook'} size={11} />
                  <span>{t.label}</span>
                </ClipLabel>
              )}
            {(song ? SONG_FX : [c.fx ?? c.w - 21]).map(x => (
              <FxMark key={x} $x={x} $y={low - 7}><Fader dark={t.muted} /></FxMark>
            ))}
          </Clip>
        );
      })}
    </Lane>
  );
}

const Tool = ({ icon, label, w, on, size = 15 }: { icon: string; label: string; w?: number; on?: boolean; size?: number }) => (
  <ToolButton $w={w} $on={on} aria-label={label} title={label}><Icon name={icon} size={size} /></ToolButton>
);

const TIMES = ['00:00:00', '00:00:10', '00:00:20', '00:00:30', '00:00:40', '00:00:50', '00:01:00', '00:01:10'];

export default function App() {
  return (
    <>
      <Global />
      <Window>
        <TitleBar>
          <Icon name="note" size={14} />
          <Title>فنش.acd * - ACID Music Studio 10.0</Title>
          <WinButtons>
            <WinButton aria-label="Minimize"><Icon name="min" size={11} /></WinButton>
            <WinButton aria-label="Restore"><Icon name="restore" size={11} /></WinButton>
            <WinButton $red aria-label="Close"><Icon name="close" size={9} /></WinButton>
          </WinButtons>
        </TitleBar>

        <MenuBar>
          {['File', 'Edit', 'View', 'Insert', 'Tools', 'Options', 'Help'].map(m => <button key={m}>{m}</button>)}
        </MenuBar>

        <Bar>
          <Tool icon="file" label="New" />
          <Tool icon="open" label="Open" />
          <Tool icon="save" label="Save" />
          <Tool icon="cloud" label="Publish" />
          <Tool icon="user" label="Account" />
          <Tool icon="globe" label="Get media" />
          <Sep />
          <Tool icon="cut" label="Cut" />
          <Tool icon="copy" label="Copy" />
          <Tool icon="paste" label="Paste" />
          <Sep $w={10} />
          <Tool icon="undo" label="Undo" />
          <Tool icon="down" label="Undo history" w={20} size={8} />
          <Tool icon="redo" label="Redo" />
          <Tool icon="down" label="Redo history" w={16} size={8} />
          <Sep $w={6} />
          <Tool icon="snap" label="Snapping" w={27} on />
          <Tool icon="down" label="Snapping options" w={13} on size={8} />
          <Tool icon="fade" label="Automatic crossfades" />
          <Tool icon="lock" label="Lock envelopes" />
          <Tool icon="locked" label="Ripple edits" on />
          <Sep $w={6} />
          <Tool icon="bars" label="Properties" />
          <Sep $w={8} />
          <Tool icon="pencil" label="Draw tool" on />
          <Tool icon="marquee" label="Selection tool" />
          <Tool icon="brush" label="Paint tool" w={29} />
          <Tool icon="down" label="Paint options" w={8} size={8} />
          <Tool icon="eraser" label="Erase tool" w={25} />
          <Tool icon="envelope" label="Envelope tool" />
          <Tool icon="time" label="Time selection tool" />
          <Sep $w={6} />
          <Tool icon="hand" label="Show me how" />
          <Tool icon="help" label="What's this?" />
        </Bar>

        <Body>
          <TrackPanel>
            <Clock><span>00:00:26.114</span><span>12.4.003</span></Clock>
            <TrackList>{TRACKS.map(t => <TrackRow key={t.n} t={t} />)}</TrackList>
            <Tempo>
              <Slider $w={67} defaultValue={24} aria-label="Playback rate" />
              <Bpm>108.000<br />BPM</Bpm>
              <Signature><b>4</b>4</Signature>
              <Icon name="fork" size={14} />
              <span>&nbsp;= A</span>
            </Tempo>
          </TrackPanel>

          <Editor>
            <EditArea>
              <Timeline>
                <MarkerBar><Region /></MarkerBar>
                <Ruler $h={15}>
                  <svg width="1400" height="15" shapeRendering="crispEdges">
                    <path d={bars.map((x, i) => `M${x}.5 ${i % 4 ? 12 : 9}V15`).join('')} stroke="#777" />
                  </svg>
                  {[1, 5, 9, 13, 17, 21, 25, 29, 33].map((n, i) => (
                    <Mark key={n} $x={Math.round(i * 93.8) + 1} $y={2}>{n}.1</Mark>
                  ))}
                </Ruler>
                <Lanes>
                  {TRACKS.map(t => <TrackLane key={t.n} t={t} />)}
                  <Playhead $from={0} $to={93} $c="#b9c6bb" />
                  <Playhead $from={93} $to={319} $c="#000" />
                </Lanes>
                <Ruler $h={17}>
                  <svg width="1400" height="17" shapeRendering="crispEdges">
                    <path
                      d={Array.from({ length: 130 }, (_, i) => `M${Math.round(i * 10.55)}.5 0V${i % 10 ? 3 : 6}`).join('')}
                      stroke="#777"
                    />
                  </svg>
                  {TIMES.map((s, i) => <Mark key={s} $x={Math.round(i * 105.5) + 1} $y={4}>{s}</Mark>)}
                </Ruler>
              </Timeline>
              <VScroll>
                <Icon name="up" size={8} />
                <Thumb $vertical><Grip $vertical /></Thumb>
                <Spring />
                <Icon name="down" size={7} />
                <VZoom>
                  <SmallButton aria-label="Zoom in height"><Icon name="plus" size={9} /></SmallButton>
                  <ZoomNub $vertical />
                  <SmallButton aria-label="Zoom out height"><Icon name="minus" size={9} /></SmallButton>
                </VZoom>
                <ScrubBar><Grip $vertical /></ScrubBar>
              </VScroll>
            </EditArea>
            <HScroll>
              <Icon name="left" size={10} />
              <Thumb $w={197}><Grip /><Grip /></Thumb>
              <Spring />
              <Icon name="right" size={9} />
              <SmallButton aria-label="Zoom in"><Icon name="plus" size={9} /></SmallButton>
              <ZoomNub />
              <SmallButton aria-label="Zoom out"><Icon name="minus" size={9} /></SmallButton>
              <SmallButton aria-label="Zoom tool"><Icon name="lens" size={10} /></SmallButton>
            </HScroll>
            <Transport>
              <Tool icon="rec" label="Record" />
              <Sep />
              <Tool icon="loop" label="Loop playback" />
              <Sep />
              <Tool icon="playstart" label="Play from start" />
              <Tool icon="play" label="Play" on />
              <Tool icon="pause" label="Pause" />
              <Tool icon="stop" label="Stop" />
              <Sep />
              <Tool icon="prev" label="Go to start" size={14} />
              <Tool icon="next" label="Go to end" size={14} />
              <Sep />
              <Tool icon="punch" label="Punch in" />
              <Sep $w={6} />
              <Tool icon="metro" label="Metronome" size={14} />
              <Tool icon="count" label="Count-off" size={14} />
            </Transport>
          </Editor>
        </Body>

        <Console>
          <Handle><Icon name="x" size={8} /><Icon name="left" size={9} /></Handle>
          <ConsoleLeft>
            <ConsoleTitle><b>Mixing Console:</b> 44,100 Hz; 16 Bit</ConsoleTitle>
            <ListBox>
              <ListItems>
                {TRACKS.slice(0, 2).map(t => (
                  <ListItem key={t.n}><Check defaultChecked /><Badge $end $c={t.color}>{t.n}</Badge>{t.name}</ListItem>
                ))}
              </ListItems>
              <ListScroll><Icon name="up" size={7} /><Icon name="down" size={6} /></ListScroll>
            </ListBox>
            <ZoomLine>
              <Icon name="zoomOut" size={15} />
              <Slider $w={36} $thumb={8} defaultValue={30} aria-label="Strip width" />
              <Icon name="zoomIn" size={15} />
            </ZoomLine>
          </ConsoleLeft>
          <Strips>
            <InsertBar>
              <Tool icon="grid" label="View" w={16} size={14} />
              <Tool icon="down" label="View options" w={16} size={8} />
              <Tool icon="pick" label="Select" w={24} size={13} />
              <Tool icon="down" label="Select options" w={20} size={8} />
              <Sep $w={6} />
              <InsertButton $w={113}><Icon name="insAudio" size={14} />Insert Audio Track</InsertButton>
              <InsertButton $w={104}><Icon name="insMidi" size={14} />Insert MIDI Track</InsertButton>
              <InsertButton $w={128}><Icon name="insFx" size={14} />Insert Assignable FX...</InsertButton>
              <InsertButton $w={72}><Icon name="insBus" size={14} />Insert Bus</InsertButton>
              <InsertButton $w={101}><Icon name="insSynth" size={14} />Insert Soft Synth...</InsertButton>
            </InsertBar>
            <StripRow>
              <Strip><StripHead>Preview</StripHead><StripName>Preview</StripName></Strip>
              {TRACKS.map(t => (
                <Strip key={t.n} $selected={t.selected}>
                  <StripHead><Badge $wide $c={t.color}>{t.n}</Badge>Audio</StripHead>
                  <StripName $selected={t.selected}>{t.name}</StripName>
                </Strip>
              ))}
            </StripRow>
            <StripScroll>
              <Icon name="left" size={9} />
              <Thumb $w={134} />
              <Spring />
              <Icon name="right" size={9} />
            </StripScroll>
          </Strips>
        </Console>

        <Status>
          <StatusCell $w={96}><Icon name="chip" size={13} />30/2,559 MB</StatusCell>
          <StatusCell $w={182}>Record Time (2 channels): 13:52:15</StatusCell>
        </Status>
      </Window>
    </>
  );
}
